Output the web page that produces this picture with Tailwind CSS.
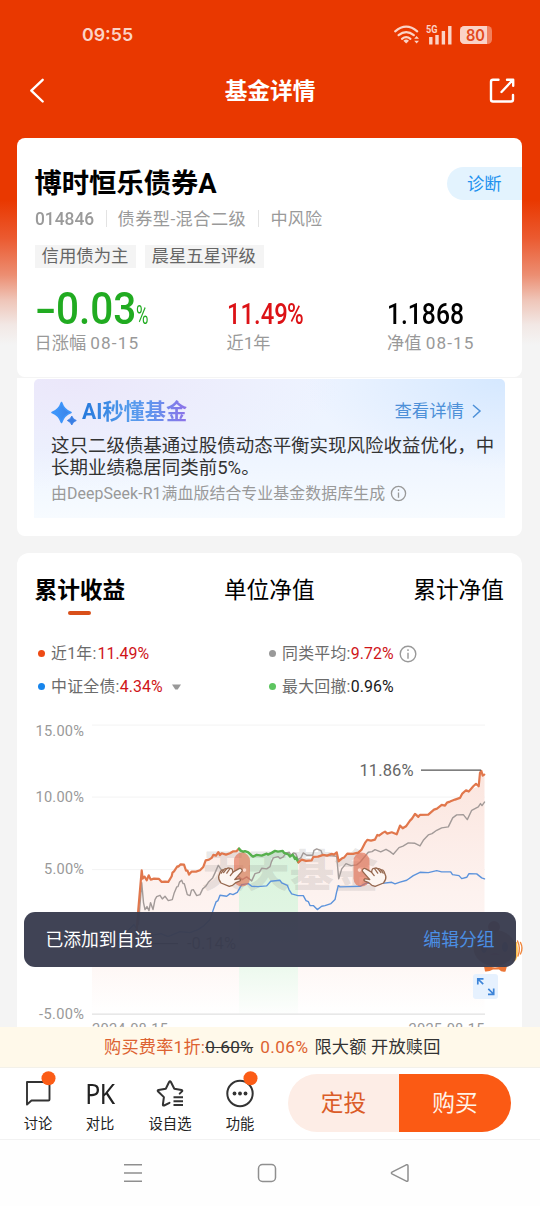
<!DOCTYPE html>
<html lang="zh-CN">
<head>
<meta charset="utf-8">
<meta name="viewport" content="width=540">
<title>基金详情</title>
<script src="https://cdn.jsdelivr.net/npm/@tailwindcss/browser@4"></script>
</head>
<body class="bg-[#f4f4f4]">
<div class="relative flex h-[1206px] w-[540px] flex-col overflow-hidden bg-[linear-gradient(to_bottom,#e93800_0,#e93800_200px,#eb5a30_238px,#ec8e72_275px,#efc5b8_300px,#f2e8e5_325px,#f4f4f4_345px)] bg-[#f4f4f4] font-['Roboto','Noto_Sans_CJK_SC',sans-serif]">

  <!-- status bar -->
  <div class="flex h-[68px] shrink-0 items-center justify-between pl-[82px] pr-[47px] text-[#fbd3c6]">
    <span class="pt-[2px] font-['Inter','Noto_Sans_CJK_SC',sans-serif] text-[17.800px] font-semibold leading-[20px]">09:55</span>
    <svg class="block" width="100" height="24" viewBox="393 22 100 24" fill="none" stroke="#fbd3c6">
      <g stroke-width="2.200" stroke-linecap="round">
        <path d="M395.200 31.400q11-9.400 22 0"/>
        <path d="M398.600 35.200q7.600-6.200 15.200 0"/>
        <path d="M402 38.800q4.200-3.400 8.400 0"/>
      </g>
      <path d="M403.400 40.800q2.800-2.400 5.600 0l-2.800 2.800z" fill="#fbd3c6" stroke="none"/>
      <path d="M414.200 38.700l2.400-2.700 2.400 2.700zM414.200 40.800l2.400 2.700 2.400-2.700z" fill="#fbd3c6" stroke="none"/>
      <text x="426" y="32.800" textLength="11.500" lengthAdjust="spacingAndGlyphs" font-family="Roboto" font-size="10.500" font-weight="700" fill="#fbd3c6" stroke="none">5G</text>
      <g stroke-width="3.400"><path d="M430.800 37v7.500M437 35v9.500M443.400 31v13.500M449.800 26v18.500"/></g>
      <rect x="460" y="26" width="32" height="18" rx="4.500" fill="#f2805c" stroke="none"/>
      <path d="M464.500 26H487v18H464.500a4.500 4.500 0 0 1-4.500-4.500v-9a4.500 4.500 0 0 1 4.500-4.500z" fill="#fbd3c6" stroke="none"/>
      <text x="466" y="40.700" textLength="19" lengthAdjust="spacingAndGlyphs" font-family="Inter" font-size="15.500" font-weight="600" fill="#e2491c" stroke="none">80</text>
    </svg>
  </div>

  <!-- title bar -->
  <div class="flex h-[46px] shrink-0 items-center justify-between pl-[28px] pr-[24px] text-white">
    <svg class="block" width="18" height="28" viewBox="28 77 18 28" fill="none" stroke="#fff" stroke-width="2.400" stroke-linecap="round" stroke-linejoin="round"><path d="M42.700 79.800L31.300 90.700 42.700 101.500"/></svg>
    <h1 class="pl-[6px] pt-[2px] text-[22.700px] font-bold leading-[30px]">基金详情</h1>
    <svg class="block" width="28" height="28" viewBox="488 77 28 28" fill="none" stroke="#fff" stroke-width="2.400" stroke-linecap="round" stroke-linejoin="round"><path d="M498.500 79.800H493a2 2 0 0 0-2 2V99.500a2 2 0 0 0 2 2H511a2 2 0 0 0 2-2V95M501.500 92L512.500 80.300M507 79.800h6.200v6"/></svg>
  </div>

  <!-- fund summary -->
  <section class="ml-[17px] mr-[18px] mt-[24px] flex h-[239px] shrink-0 flex-col rounded-[8px] bg-white pl-[17.500px] pt-[27px]">
    <div class="flex h-[36px] items-center justify-between">
      <h2 class="pt-[2px] text-[27.300px] font-bold leading-[36px] text-black">博时恒乐债券A</h2>
      <span class="h-[33px] w-[75px] rounded-l-full bg-[#e3f3fe] pl-[20px] pt-px text-[17.300px] leading-[32px] text-[#2191ef]">诊断</span>
    </div>
    <div class="mt-[6px] flex h-[22px] items-center text-[17.200px] leading-[22px] text-[#9a9a9a]">
      <span class="w-[71px] pt-[2px] text-[18px] font-medium"><span class="inline-block origin-left scale-x-[0.965]">014846</span></span>
      <span class="h-[17px] w-px bg-[#e3e3e3]"></span>
      <span class="w-[140px] pl-[11px] pt-px tracking-[0.450px]">债券型-混合二级</span>
      <span class="ml-[11px] h-[17px] w-px bg-[#e3e3e3]"></span>
      <span class="pl-[12px] pt-px">中风险</span>
    </div>
    <div class="mt-[16px] flex gap-[9px] text-[17.400px] leading-[23px] text-[#666]">
      <span class="h-[23px] w-[101px] bg-[#f4f4f4] pl-[7px]">信用债为主</span>
      <span class="h-[23px] w-[119px] bg-[#f4f4f4] pl-[7px]">晨星五星评级</span>
    </div>
    <div class="mt-[17px] grid grid-cols-[192px_160.500px_1fr] text-[17.200px] text-[#999]">
      <div>
        <div class="flex h-[46px] items-baseline text-[#21ab21]">
          <span class="w-[21px] origin-left scale-x-[1.400] text-[45px] font-medium leading-[48px]">-</span><span class="w-[80px] origin-left scale-x-[0.900] text-[45px] font-medium leading-[48px]">0.03</span>
          <span class="origin-left scale-x-[0.680] text-[25px] leading-[24px]">%</span>
        </div>
        <div class="leading-[24px]">日涨幅 <span class="tracking-[1.100px]">08-15</span></div>
      </div>
      <div>
        <div class="flex h-[46px] pt-[12px] text-[29px] leading-[34px] text-[#dc1216]"><span class="w-[60.500px] origin-left scale-x-[0.820] font-medium">11.49</span><span class="origin-left scale-x-[0.780] font-medium">%</span></div>
        <div class="leading-[24px]">近1年</div>
      </div>
      <div>
        <div class="h-[46px] origin-left scale-x-[0.850] pt-[12px] text-[29px] font-medium leading-[34px] text-black">1.1868</div>
        <div class="leading-[24px]">净值 <span class="tracking-[1.100px]">08-15</span></div>
      </div>
    </div>
  </section>

  <!-- AI digest -->
  <section class="ml-[17px] mr-[18px] mt-px flex h-[158px] shrink-0 flex-col rounded-b-[8px] bg-white px-[17px] pt-px">
    <div class="flex h-[139px] flex-col rounded-t-[5px] bg-[radial-gradient(ellipse_200px_90px_at_100%_0,#d5e8ff,#d5e8ff00),radial-gradient(ellipse_270px_110px_at_8%_0,#ebe7fa,#ebe7fa00),linear-gradient(to_bottom,#eef4ff,#edf4ff_50%,#f7fbff)] pl-[17px]">
      <div class="mt-[18px] flex h-[28px] items-center">
        <svg class="block" width="27" height="28" viewBox="51 397 27 28"><defs><linearGradient id="spark" x1="0" x2="1"><stop stop-color="#3e9bff"/><stop offset="1" stop-color="#3b7fe4"/></linearGradient></defs><path d="M61.500 402.500q2.500 7.500 9.500 10q-7 2.500-9.500 10q-2.500-7.500-9.500-10q7-2.500 9.500-10z" fill="url(#spark)" stroke="#3e95fa" stroke-width="1.600" stroke-linejoin="round"/><path d="M71.800 416q1.200 3.300 4.500 4.500q-3.300 1.200-4.500 4.500q-1.200-3.300-4.500-4.500q3.300-1.200 4.500-4.500z" fill="#3b7fe4" stroke="#3b7fe4" stroke-width=".8"/></svg>
        <h3 class="ml-[4px] mt-[2px] bg-[linear-gradient(to_right,#2478dc,#559cec_45%,#5f95ee_65%,#8e72e8)] bg-clip-text text-[21.200px] font-bold leading-[28px] text-transparent">AI秒懂基金</h3>
        <span class="ml-auto text-[17.400px] leading-[26px] text-[#4d90d8]">查看详情</span>
        <svg class="ml-[7px] mr-[23px] block" width="11" height="16" viewBox="0 0 11 16" fill="none" stroke="#4d90d8" stroke-width="1.500"><path d="M2 2l7 6-7 6.500"/></svg>
      </div>
      <p class="mt-[11px] text-[18.480px] leading-[21.700px] text-[#333]">这只二级债基通过股债动态平衡实现风险收益优化，中<br>长期业绩稳居同类前5%。</p>
      <div class="mt-[4.500px] flex h-[20px] items-center text-[15.900px] leading-[20px] text-[#999]">
        <span class="tracking-[0.080px]">由DeepSeek-R1满血版结合专业基金数据库生成</span>
        <svg class="ml-[5px] block" width="17" height="17" viewBox="0 0 18 18" fill="none" stroke="#999" stroke-width="1.400"><circle cx="9" cy="9" r="7.500"/><path d="M9 8v5.500M9 4.500v1.800"/></svg>
      </div>
    </div>
  </section>

  <!-- performance -->
  <section class="ml-[17px] mr-[18px] mt-[17px] h-[474px] shrink-0 overflow-hidden rounded-t-[12px] bg-white pt-[21px]">
    <div class="flex justify-between pl-[17.500px] pr-[18px] text-[22.700px] leading-[34px] text-black">
      <div class="flex flex-col items-center"><span class="font-bold">累计收益</span><span class="mt-[3px] h-[4px] w-[23px] rounded-full bg-[#d9501a]"></span></div>
      <span>单位净值</span>
      <span>累计净值</span>
    </div>
    <div class="mt-[22px] grid grid-cols-[231px_1fr] pl-[21px] text-[15.900px] leading-[33.200px] tracking-[0.250px] text-[#6b6b6b]">
      <div class="flex items-center"><i class="mr-[6px] h-[7px] w-[7px] rounded-full bg-[#ee4a14]"></i>近1年:<span class="ml-px tracking-normal text-[#cf1519]">11.49%</span></div>
      <div class="flex items-center"><i class="mr-[6px] h-[7px] w-[7px] rounded-full bg-[#999]"></i>同类平均:<span class="tracking-[0.100px] text-[#cf1519]">9.72%</span>
        <svg class="ml-[5px] block" width="18" height="18" viewBox="0 0 18 18" fill="none" stroke="#999" stroke-width="1.400"><circle cx="9" cy="9" r="7.800"/><path d="M9 7.800v6M9 4.300v1.800"/></svg></div>
      <div class="flex items-center"><i class="mr-[6px] h-[7px] w-[7px] rounded-full bg-[#1785ec]"></i>中证全债:<span class="tracking-[0.100px] text-[#cf1519]">4.34%</span>
        <svg class="ml-[9px] block" width="9" height="6" viewBox="0 0 9 6"><path d="M0 0.500h9L5.700 5.500h-2.400z" fill="#999"/></svg></div>
      <div class="flex items-center"><i class="mr-[6px] h-[7px] w-[7px] rounded-full bg-[#5dc560]"></i>最大回撤:<span class="tracking-[0.100px] text-[#1a1a1a]">0.96%</span></div>
    </div>

    <svg class="block" width="505" height="324" viewBox="17 703.400 505 324" font-family="Roboto" fill="none">
      <defs>
        <linearGradient id="area" x1="0" y1="771" x2="0" y2="1014" gradientUnits="userSpaceOnUse"><stop stop-color="#fbe5de"/><stop offset="0.500" stop-color="#fdf2ef"/><stop offset="0.800" stop-color="#fef7f5"/><stop offset="1" stop-color="#fff"/></linearGradient>
        <linearGradient id="dip" x1="0" y1="850" x2="0" y2="1014" gradientUnits="userSpaceOnUse"><stop stop-color="#d9f3dc"/><stop offset="0.550" stop-color="#e3f6e5"/><stop offset="1" stop-color="#fdfefd"/></linearGradient>
      </defs>
      <path d="M92 725.500h393M92 797.500h393M92 870h393M92 942h393" stroke="#f3f3f3"/>
      <path d="M92 942L137 935 138.300 910 141.700 871 143 879 146.700 881 148.700 876 151 880 159 879.300 162 882.300 168.300 882.300 172 877 174 872 177.300 867 181 865 184 865 187 871 189 875 192 872 200 871 203.300 867 206 861 212 858 218 853 230 854 239 849 243 852 248 853 252 856 262 856 267 854 275 851.500 283 851.500 288 855 293 855 298 862.700 302 860 312 860.700 313 857 323 855 337 853 339 862 347 854 358 853 365 843 375 840 383 833 397 834.700 400 826 406 827 415 814 428 815 442 805 460 798 466 791 479 787 481 771 484.500 775V1014H92z" fill="url(#area)"/>
      <path d="M239 849L243 852 248 853 252 856 262 856 267 854 275 851.500 283 851.500 288 855 293 855 298 862.700V1014H239z" fill="url(#dip)"/>
      <path d="M92 1014.500h393" stroke="#d9d9d9"/>
      <text x="202" y="887.500" font-family="Noto Sans CJK SC" font-size="44" font-weight="900" fill="#777" fill-opacity="0.180" textLength="176">天天基金</text>
      <g stroke-linejoin="round" stroke-linecap="round">
        <path stroke="#a29a98" stroke-width="1.400" d="M138.500 925L141.700 883L143.500 903 145 910 147 907 149 911 150.500 903 153 910 155 900 156.700 897 160 895.700 162.300 899.300 165 896.700 168.300 901 172.300 900 174 894 176.700 887.300 178 887 179.500 882.500 181.700 880.700 183 884 184.300 884 187.300 895 190 896 191.500 890.500 193.300 890 196.700 896 200 895 202.700 889.300 205.700 886.700 208.300 882.700 212.700 878.300 215 873.300 218.300 865.700 221.700 870.700 226.700 875.700 233 876 238.300 876.700 242.300 880 246.700 877.300 251.700 881.300 255 874 259.300 872.700 261.700 868.700 266.700 869.300 270 867 271.500 862 273.300 858.300 278 857 280 859 283.300 857.300 286 853.300 289.300 852.700 291 855.700 293.300 853.300 295.700 854 298.300 860 301 858 303.300 853.300 306.700 855.700 312.700 855.700 314 850.700 316.700 849.300 321 851 322.700 855.700 329 856 336.700 856.700 338.700 879.300 341.700 869.300 346 864 351 866 356.700 865.300 360 862.700 365 856.700 368.300 852.700 372 852 375 850 380.700 852.300 386 849.700 390 852 393.300 854.700 399 848 403 846.500 408.300 843.300 415 843.700 420 846.300 423.300 840.700 428.300 835.300 432 834 436.700 830.700 441.700 828.300 448.300 827.300 452.700 818.300 456.700 815.300 463.300 815 467.300 820 471.700 810.700 478.300 807.300 480.500 804 482 806 484.500 802.500"/>
        <path stroke="#5c93dc" stroke-width="1.400" d="M92 941L99 944 107 939 115 946 121 936 127 932 134 925 140 934 150 936 161 934 168 937 180 932 190 933 198 930 204 926 210 920 213.300 910 216 902.300 218 901 220 895.700 226.700 896.700 230 894 233 895 237.300 892.700 239.300 889.300 241.700 885 248.300 884 251.700 886.700 258 887 266.700 886.300 270.700 881.700 280 880.700 281.700 883.300 287.300 885.700 289 890 291.700 894.300 298 896 303.300 896 306 901 308.300 902 310 906 313.300 906 317.300 910 321.700 906.700 325 906 331 904 335 900 336.500 893 338.300 886 340 887.300 350 887 360 886.700 366.700 883.300 380 884 391.700 882.700 395 884.300 400 882.500 406.700 880.700 413.300 876 420 872.700 428.300 873 436.700 871 441.700 872.300 450.700 872.300 452.500 875 459 876 461.700 879 466.700 877.700 469 874 476.700 874.300 481.700 878.300 484.500 879.300"/>
        <path stroke="#e1774c" stroke-width="2.200" d="M136 940L138.300 910 141.700 870.700 142.700 879 144.500 877 146.700 880.700 148.700 875.700 150.700 880 154 879 159 879.300 161.700 882.300 165 882 168.300 882.300 171.700 876.700 172.500 873 174 871.700 177.300 866.700 178.500 867 180.700 864.700 184 865 186 871 187.500 871 189 875 191.700 872 196 872 200 870.700 203.300 867.300 205.700 860.700 209 860 211.700 858.300 213.300 855.300 216 856 218.300 852.500 220 855.500 221.700 853.700 226 855 230 853.700 233.300 851.700 236.700 851.500 239 849"/>
        <path stroke="#56b04d" stroke-width="2.400" d="M239 849L240.700 851 243.300 852.300 245 851.500 248.300 852.700 251.700 856 253 857 256.700 855.300 261.700 856 266.700 854 268 855 271.700 853.300 275 851.300 278 852 282.700 851.300 284 853.300 288.300 854.700 290 857 292.700 855 295 859.300 296 858 298.300 862.700"/>
        <path stroke="#e1774c" stroke-width="2.200" d="M298.300 862.700L301.700 860 306 861.300 311.700 860.700 313.300 857.300 318 857 323.300 855.300 327 856 331.700 854.300 334 855 336.700 852.700 338.700 861.700 341.700 859 344 858 347.300 854 353 854.300 358.300 853 361.700 850 365 843.300 367.300 840.300 371 841 375 840 377.300 835.300 379 836 382.700 833.300 385 832 387.300 834 391.700 832.700 396.700 834.700 400 826 402.700 828.700 406 826.700 410 821 412 819 415 814.300 418.300 817.300 420 815.300 428.300 815 434 810 437 809 441.700 805.300 445 806 447 803 450 802 455 800 460 798.300 462.300 794 466 790.700 468.700 792 473.300 786.700 476 784.300 478.700 786.700 480 773.300 481.300 771.300 482.700 776 484.300 775"/>
      </g>
      <rect x="234" y="853" width="16" height="34" rx="8" fill="#e2694a" fill-opacity="0.620"/>
      <rect x="353.500" y="853" width="16" height="34" rx="8" fill="#e2694a" fill-opacity="0.620"/>
      <circle cx="244.500" cy="870.500" r="1.800" fill="#fbd8cd"/><circle cx="359.500" cy="870.500" r="1.800" fill="#fbd8cd"/>
      <g stroke="#96684f" stroke-width="1.300" stroke-linejoin="round" stroke-linecap="round" fill="#fdf6f2">
        <path d="M363.200 869.300q-1.700 1.300-.2 3l6.800 7.700q-3-.8-5.200-.6q-1.500 1 .4 2.100q3.800.8 7 4.300l3.200.9 8.300-3.300q2.900-3.300 2.300-6.800l-1.800-4.700q-1.200-2.300-3-1.400q-1.200-2.100-3.300-1.300q-1.600-1.500-3.200-.3q-1.900-.4-2.500 1.500l-.4 2.300q-3-1.900-6.200-3.700q-1.300-.7-2.200.3z"/>
        <path d="M371.600 872.700l2.600 3.300M374.500 868.900l3.200 4.600M378 869.200l2.900 3.700M381.300 870.500l1.900 3"/>
      </g>
      <g stroke="#96684f" stroke-width="1.300" stroke-linejoin="round" stroke-linecap="round" fill="#fdf6f2" transform="translate(604.500 0) scale(-1 1)">
        <path d="M363.200 869.300q-1.700 1.300-.2 3l6.800 7.700q-3-.8-5.200-.6q-1.500 1 .4 2.100q3.800.8 7 4.300l3.200.9 8.300-3.300q2.900-3.300 2.300-6.800l-1.800-4.700q-1.200-2.300-3-1.400q-1.200-2.100-3.300-1.300q-1.600-1.500-3.200-.3q-1.900-.4-2.500 1.500l-.4 2.300q-3-1.900-6.200-3.700q-1.300-.7-2.200.3z"/>
        <path d="M371.600 872.700l2.600 3.300M374.500 868.900l3.200 4.600M378 869.200l2.900 3.700M381.300 870.500l1.900 3"/>
      </g>
      <path d="M421 770.500h60" stroke="#555" stroke-width="1.400"/>
      <path d="M136 944h42" stroke="#555" stroke-width="1.400"/>
      <text x="359.500" y="776.300" font-size="16.500" fill="#666" textLength="54">11.86%</text>
      <text x="187" y="949.500" font-size="16.500" fill="#555" textLength="49">-0.14%</text>
      <g font-size="14.600" fill="#999">
        <text x="35.500" y="736.700" textLength="48.500">15.00%</text>
        <text x="35.500" y="802.300" textLength="48.500">10.00%</text>
        <text x="44" y="874.700" textLength="40">5.00%</text>
        <text x="39" y="1019" textLength="45">-5.00%</text>
        <text x="92" y="1034.500" textLength="76">2024-08-15</text>
        <text x="408.500" y="1034.500" textLength="76">2025-08-15</text>
      </g>
    </svg>
  </section>

  <!-- fee strip -->
  <div class="flex h-[41px] shrink-0 items-center whitespace-pre border-b border-[#f3f1ea] bg-[#fff9ea] pl-[104px] text-[17.200px] leading-[40px] tracking-[0.200px] text-[#333]"><span class="text-[#dd6231]">购买费率1折:</span><span class="tracking-[0.400px] line-through">0.60%</span><span class="ml-[7px] tracking-[0.400px] text-[#dd6231]">0.06%</span><span class="ml-[6px]">限大额 开放赎回</span></div>

  <!-- action bar -->
  <div class="flex h-[72px] shrink-0 border-b border-[#f2f2f2] bg-white text-[14.300px] leading-[22px] text-[#222]">
    <div class="flex w-[76px] flex-col items-center pt-[3px]">
      <svg class="block" width="36" height="42" viewBox="20 1071 36 42" fill="none"><path d="M27 1082h21.500a1 1 0 0 1 1 1v16.500a1 1 0 0 1-1 1H31.500L27 1104.500z" stroke="#333" stroke-width="1.900" stroke-linejoin="round"/><circle cx="48.500" cy="1078.300" r="7" fill="#fb5c16"/></svg>
      <span>讨论</span>
    </div>
    <div class="flex w-[48px] flex-col items-center pt-[3px]">
      <span class="h-[42px] font-['Noto_Sans',sans-serif] text-[27px] leading-[46px] tracking-[-0.500px]"><span class="inline-block scale-x-[0.920]">PK</span></span>
      <span>对比</span>
    </div>
    <div class="flex w-[92px] flex-col items-center pt-[3px]">
      <svg class="block" width="36" height="42" viewBox="152 1071 36 42" fill="none" stroke="#333" stroke-width="2" stroke-linecap="round" stroke-linejoin="round"><path d="M169.500 1102.800l-5.400 2.700q-1.300.4-1.200-1l1-7.400-5.800-5.600q-1-1.100.4-1.600l7.300-1.200 3.300-6.700q.9-1.400 1.800 0l3.400 6.700 7.200 1.200q1.300.5.5 1.500l-2.300 2.200"/><path d="M173.500 1097.300h9.500M173.500 1101.200h9.500M173.500 1105.100h9.500" stroke-linecap="butt"/></svg>
      <span>设自选</span>
    </div>
    <div class="flex w-[48px] flex-col items-center pt-[3px]">
      <svg class="block" width="40" height="42" viewBox="220 1071 40 42" fill="none"><circle cx="240" cy="1093.500" r="12.700" stroke="#333" stroke-width="2"/><g fill="#333"><circle cx="234.500" cy="1093.500" r="1.900"/><circle cx="240" cy="1093.500" r="1.900"/><circle cx="245.500" cy="1093.500" r="1.900"/></g><circle cx="250.500" cy="1078.300" r="7" fill="#fb5c16"/></svg>
      <span>功能</span>
    </div>
    <div class="ml-[24px] mt-[6px] flex h-[58px] w-[223px] overflow-hidden rounded-full text-center text-[22.700px] leading-[60px]">
      <span class="w-[111px] bg-[#fdede6] text-[#db5c28]">定投</span>
      <span class="w-[112px] bg-[#fb5a14] text-[#fff3e8]">购买</span>
    </div>
  </div>

  <!-- system navigation -->
  <div class="h-[66px] shrink-0 bg-[#fefefe]">
    <svg class="block" width="540" height="66" viewBox="0 1140 540 66" fill="none" stroke="#8f8f8f" stroke-width="1.500" stroke-linejoin="round"><path d="M124 1164.800h18M124 1173h18M124 1181.300h18"/><rect x="258.500" y="1164.500" width="17" height="17" rx="4"/><path d="M406.300 1164.800L392.400 1171.800q-2 1.200 0 2.400L406.300 1181.200q1.700.6 1.700-1.300V1166.100q0-1.900-1.700-1.300z"/></svg>
  </div>

  <!-- floating mascot, toast and expand button -->
  <svg class="absolute left-[468px] top-[918px]" width="60" height="58" viewBox="468 918 60 58" fill="none">
    <path d="M512 942h5q2 12-1 18l-4 3z" fill="#ffc24e"/><path d="M517.500 941q3.500 7 .5 15M520.500 942.500q3 6 0 11.500" stroke="#f0853b" stroke-width="1.400" stroke-linecap="round"/>
    <ellipse cx="494.500" cy="948" rx="21" ry="18" fill="#a86a50"/><circle cx="494" cy="927" r="6" fill="#a84028"/>
    <ellipse cx="484" cy="948" rx="3" ry="5" fill="#224"/><ellipse cx="505" cy="947" rx="3" ry="5" fill="#224"/><path d="M490 955q5-4 10 0z" fill="#a22"/>
    <path d="M484 966l11 1.500 12-1.500-1.500 5.500q-4 .8-6.500-2h-6q-4 2.500-8 2z" fill="#ec7636"/>
  </svg>
  <div class="absolute left-[24px] top-[912px] flex h-[55px] w-[492px] items-center justify-between rounded-[11px] bg-[#3a3d50]/97 pl-[21.500px] pr-[21.500px] text-[17.800px] leading-[55px] text-white"><span>已添加到自选</span><span class="text-[#4b8fe4]">编辑分组</span></div>
  <div class="absolute left-[473px] top-[974px] h-[25px] w-[25px] rounded-[3px] bg-[#e6f1fe]">
    <svg class="block" width="25" height="25" viewBox="0 0 25 25" fill="none" stroke="#3d84d8" stroke-width="1.700"><path d="M4.800 10.500V4.800H10.500M5 5l5.200 5.200M15 20.300h5.700V14.500M20.500 20L15.300 14.800"/></svg>
  </div>
</div>
</body>
</html>
